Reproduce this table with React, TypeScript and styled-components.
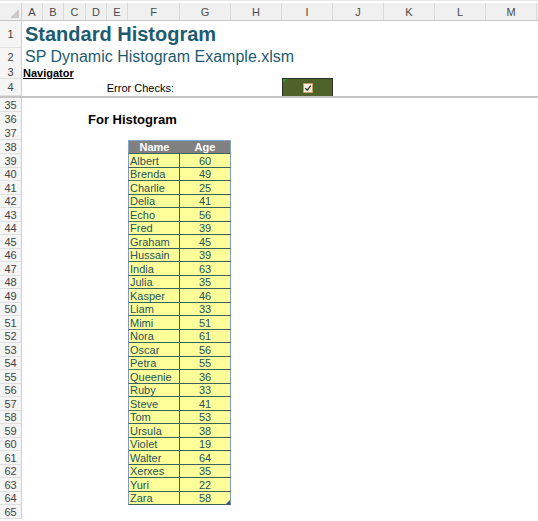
import React from "react";
import styled, { createGlobalStyle } from "styled-components";

const Global = createGlobalStyle`
  html, body { margin: 0; padding: 0; background: #fff; overflow: hidden; }
  body { font-family: "Liberation Sans", Arial, sans-serif; }
`;

const COLS = "22px 21px 21px 22px 21px 21px 52px 51px 51px 51px 51px 51px 51px 51px";

const Sheet = styled.div`
  width: 538px;
  height: 521px;
  display: flex;
  flex-direction: column;
  background: #fff;
`;

const TopStrip = styled.div`
  height: 3px;
  background: #fff;
  border-top: 1px solid #e6e6e6;
  box-sizing: border-box;
`;

const ColHeadRow = styled.div`
  display: grid;
  grid-template-columns: ${COLS};
  height: 18px;
  background: #f0f0f0;
  border-bottom: 1px solid #c8c8c8;
  box-sizing: border-box;
`;

const Corner = styled.div`
  position: relative;
  border-right: 1px solid #d0d0d0;
  &::after {
    content: "";
    position: absolute;
    right: 2px;
    bottom: 2px;
    width: 0;
    height: 0;
    border-left: 9px solid transparent;
    border-bottom: 9px solid #c9c9c9;
  }
`;

const ColLetter = styled.div`
  display: flex;
  align-items: center;
  justify-content: center;
  font-size: 11px;
  color: #4a4a4a;
  border-right: 1px solid #dadada;
`;

const Row = styled.div<{ $h: number; $freeze?: boolean }>`
  display: grid;
  grid-template-columns: ${COLS};
  height: ${(p) => p.$h}px;
  flex: none;
  box-sizing: border-box;
  ${(p) => (p.$freeze ? "border-bottom: 2px solid #c4c4c4;" : "")}
`;

const RowHead = styled.div`
  grid-column: 1;
  display: flex;
  align-items: center;
  justify-content: center;
  font-size: 11px;
  color: #444;
  background: #f5f5f5;
  border-right: 1px solid #cfcfcf;
  border-bottom: 1px solid #e0e0e0;
  box-sizing: border-box;
`;

const Title = styled.div`
  grid-column: 2 / 15;
  display: flex;
  align-items: flex-start;
  padding-top: 2px;
  padding-left: 3px;
  font-size: 20px;
  font-weight: bold;
  color: #1d5b70;
  white-space: nowrap;
`;

const Subtitle = styled.div`
  grid-column: 2 / 15;
  display: flex;
  align-items: flex-end;
  padding-left: 3px;
  font-size: 16px;
  line-height: 18px;
  color: #1d5b70;
  white-space: nowrap;
`;

const NavLink = styled.div`
  grid-column: 2 / 6;
  display: flex;
  align-items: flex-end;
  padding-left: 1px;
  font-size: 11px;
  font-weight: bold;
  text-decoration: underline;
  color: #000;
  white-space: nowrap;
`;

const Label = styled.div`
  grid-column: 2 / 8;
  display: flex;
  align-items: center;
  justify-content: flex-end;
  padding-right: 6px;
  font-size: 11px;
  color: #000;
  white-space: nowrap;
`;

const CheckCell = styled.div`
  grid-column: 10;
  position: relative;
  display: flex;
  align-items: center;
  justify-content: center;
  margin-top: -1px;
  background: #4f6228;
  border: 1px solid #2e2e2e;
  border-bottom: none;
  &::before {
    content: "";
    position: absolute;
    left: 0;
    top: 0;
    border-top: 4px solid #22a322;
    border-right: 4px solid transparent;
  }
`;

const Section = styled.div`
  grid-column: 5 / 15;
  display: flex;
  align-items: center;
  padding-left: 2px;
  font-size: 13px;
  font-weight: bold;
  color: #000;
  white-space: nowrap;
`;

const THead = styled.div<{ $first?: boolean }>`
  grid-column: ${(p) => (p.$first ? 7 : 8)};
  display: flex;
  align-items: center;
  justify-content: center;
  background: #808080;
  color: #fff;
  font-size: 11px;
  font-weight: bold;
  border-top: 1px solid #8aa4c4;
  ${(p) => (p.$first ? "border-left: 1px solid #8aa4c4;" : "border-right: 1px solid #8aa4c4;")}
  border-bottom: 1px solid #3c6161;
  box-sizing: border-box;
`;

const TCell = styled.div<{ $first?: boolean; $corner?: boolean }>`
  grid-column: ${(p) => (p.$first ? 7 : 8)};
  position: relative;
  display: flex;
  align-items: center;
  justify-content: ${(p) => (p.$first ? "flex-start" : "center")};
  padding-left: ${(p) => (p.$first ? "1px" : "0")};
  background: #ffff99;
  color: #24535c;
  font-size: 11px;
  border-bottom: 1px solid #3c6161;
  ${(p) =>
    p.$first
      ? "border-left: 1px solid #7f9cc0; border-right: 1px solid #3c6161;"
      : "border-right: 1px solid #7f9cc0;"}
  box-sizing: border-box;
  ${(p) =>
    p.$corner
      ? `&::after {
      content: "";
      position: absolute;
      right: 0;
      bottom: 0;
      border-left: 4px solid transparent;
      border-bottom: 4px solid #2f4f8f;
    }`
      : ""}
`;

const CheckIcon = () => (
  <svg width="10" height="10" viewBox="0 0 10 10">
    <rect x="0.5" y="0.5" width="9" height="9" fill="#f4efe4" stroke="#c99b62" />
    <path d="M2.3 5.1 L4.2 7.2 L7.8 2.6" fill="none" stroke="#2d3a1a" strokeWidth="1.3" />
  </svg>
);

const data: [string, number][] = [
  ["Albert", 60],
  ["Brenda", 49],
  ["Charlie", 25],
  ["Delia", 41],
  ["Echo", 56],
  ["Fred", 39],
  ["Graham", 45],
  ["Hussain", 39],
  ["India", 63],
  ["Julia", 35],
  ["Kasper", 46],
  ["Liam", 33],
  ["Mimi", 51],
  ["Nora", 61],
  ["Oscar", 56],
  ["Petra", 55],
  ["Queenie", 36],
  ["Ruby", 33],
  ["Steve", 41],
  ["Tom", 53],
  ["Ursula", 38],
  ["Violet", 19],
  ["Walter", 64],
  ["Xerxes", 35],
  ["Yuri", 22],
  ["Zara", 58],
];

const letters = ["A", "B", "C", "D", "E", "F", "G", "H", "I", "J", "K", "L", "M"];

export default function App() {
  return (
    <>
      <Global />
      <Sheet>
        <TopStrip />
        <ColHeadRow>
          <Corner />
          {letters.map((l) => (
            <ColLetter key={l}>{l}</ColLetter>
          ))}
        </ColHeadRow>
        <Row $h={27}>
          <RowHead>1</RowHead>
          <Title>Standard Histogram</Title>
        </Row>
        <Row $h={17}>
          <RowHead>2</RowHead>
          <Subtitle>SP Dynamic Histogram Example.xlsm</Subtitle>
        </Row>
        <Row $h={14}>
          <RowHead>3</RowHead>
          <NavLink>Navigator</NavLink>
        </Row>
        <Row $h={19} $freeze>
          <RowHead>4</RowHead>
          <Label>Error Checks:</Label>
          <CheckCell>
            <CheckIcon />
          </CheckCell>
        </Row>
        <Row $h={14}>
          <RowHead>35</RowHead>
        </Row>
        <Row $h={14}>
          <RowHead>36</RowHead>
          <Section>For Histogram</Section>
        </Row>
        <Row $h={14}>
          <RowHead>37</RowHead>
        </Row>
        <Row $h={14}>
          <RowHead>38</RowHead>
          <THead $first>Name</THead>
          <THead>Age</THead>
        </Row>
        {data.map(([name, age], i) => (
          <Row key={name} $h={i % 2 === 0 ? 14 : 13}>
            <RowHead>{39 + i}</RowHead>
            <TCell $first>{name}</TCell>
            <TCell $corner={i === data.length - 1}>{age}</TCell>
          </Row>
        ))}
        <Row $h={14}>
          <RowHead>65</RowHead>
        </Row>
      </Sheet>
    </>
  );
}
